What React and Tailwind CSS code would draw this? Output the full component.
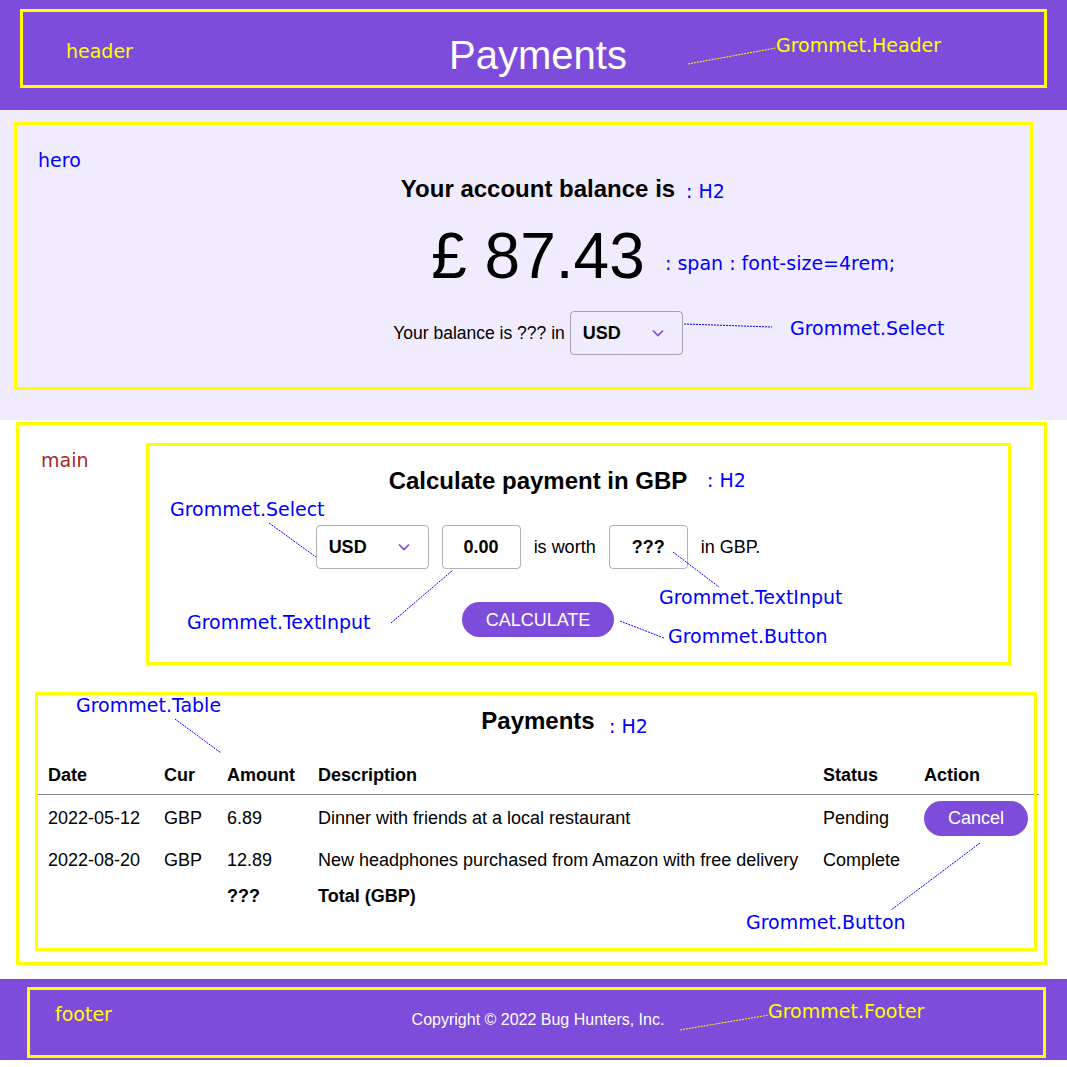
import React from "react";

const PURPLE = "#7d4cdb";

// Grommet-like down chevron
const FormDown = () => (
  <svg width="20" height="20" viewBox="0 0 24 24" fill="none">
    <polyline points="18 9 12 15 6 9" stroke={PURPLE} strokeWidth="2" />
  </svg>
);

const Select = () => (
  <div className="flex items-center justify-between w-[113px] h-[44px] pl-[12px] pr-[14px] border border-black/30 rounded-[4px]">
    <span className="text-[18px] font-bold">USD</span>
    <FormDown />
  </div>
);

const TextBox = ({ value }) => (
  <div className="flex items-center justify-center w-[79px] h-[44px] border border-black/30 rounded-[4px] text-[18px] font-bold">
    {value}
  </div>
);

const rows = [
  { date: "2022-05-12", cur: "GBP", amount: "6.89", desc: "Dinner with friends at a local restaurant", status: "Pending", cancel: true },
  { date: "2022-08-20", cur: "GBP", amount: "12.89", desc: "New headphones purchased from Amazon with free delivery", status: "Complete", cancel: false },
];

const cols = "grid grid-cols-[116px_63px_91px_505px_101px_126px] w-[1002px]";

// annotation label (overlay)
const Note = ({ x, y, color, children }) => (
  <span
    className="absolute whitespace-nowrap text-[19px] leading-[20px] font-['DejaVu_Sans',sans-serif]"
    style={{ left: x, top: y - 9, color }}
  >
    {children}
  </span>
);

const Box = ({ x, y, w, h }) => (
  <div className="absolute border-[3px] border-[#ffff00]" style={{ left: x, top: y, width: w, height: h }} />
);

export default function App() {
  const blue = "#0000ff";
  const yellow = "#ffff00";
  const lines = [
    [688, 64, 776, 48, yellow],
    [684, 324, 772, 327, blue],
    [269, 523, 316, 557, blue],
    [391, 623, 453, 570, blue],
    [673, 552, 719, 587, blue],
    [620, 621, 664, 638, blue],
    [175, 719, 221, 753, blue],
    [980, 843, 891, 910, blue],
    [680, 1030, 769, 1015, yellow],
  ];

  return (
    <div className="relative w-[1067px] h-[1067px] bg-white text-black font-['Liberation_Sans',Arial,sans-serif]">
      {/* header */}
      <header className="h-[110px] bg-[#7d4cdb] flex items-center justify-center pl-[9px]">
        <h1 className="text-[40px] leading-none text-white">Payments</h1>
      </header>

      {/* hero */}
      <section className="h-[310px] bg-[#f1ebfe] flex flex-col items-center pl-[9px] pt-[64px]">
        <h2 className="text-[24px] leading-[30px] font-bold">Your account balance is</h2>
        <span className="mt-[20px] text-[64px] leading-none">£ 87.43</span>
        <div className="mt-[23px] flex items-center gap-[5px]">
          <span className="text-[17.5px]">Your balance is ??? in</span>
          <Select />
        </div>
      </section>

      {/* main */}
      <main className="h-[559px] bg-white flex flex-col items-center pl-[9px] pt-[46px]">
        <h2 className="text-[24px] leading-[30px] font-bold">Calculate payment in GBP</h2>
        <div className="mt-[29px] flex items-center gap-[13px]">
          <Select />
          <TextBox value="0.00" />
          <span className="text-[18px]">is worth</span>
          <TextBox value="???" />
          <span className="text-[18px]">in GBP.</span>
        </div>
        <button className="mt-[33px] h-[35px] px-[24px] rounded-full bg-[#7d4cdb] text-white text-[18px] leading-none">
          CALCULATE
        </button>

        <h2 className="mt-[69px] text-[24px] leading-[30px] font-bold">Payments</h2>
        <div className="mt-[20px] text-[18px]">
          <div className={`${cols} h-[39px] items-center border-b border-[#888] font-bold`}>
            {["Date", "Cur", "Amount", "Description", "Status", "Action"].map((h) => (
              <div key={h} className="pl-[11px]">{h}</div>
            ))}
          </div>
          {rows.map((r, i) => (
            <div key={r.date} className={`${cols} ${i === 0 ? "h-[46px]" : "h-[38px]"} items-center`}>
              <div className="pl-[11px]">{r.date}</div>
              <div className="pl-[11px]">{r.cur}</div>
              <div className="pl-[11px]">{r.amount}</div>
              <div className="pl-[11px] whitespace-nowrap">{r.desc}</div>
              <div className="pl-[11px]">{r.status}</div>
              <div className="pl-[11px]">
                {r.cancel && (
                  <button className="h-[35px] px-[24px] rounded-full bg-[#7d4cdb] text-white text-[18px] leading-none">
                    Cancel
                  </button>
                )}
              </div>
            </div>
          ))}
          <div className={`${cols} h-[34px] items-center font-bold`}>
            <div />
            <div />
            <div className="pl-[11px]">???</div>
            <div className="pl-[11px]">Total (GBP)</div>
            <div />
            <div />
          </div>
        </div>
      </main>

      {/* footer */}
      <footer className="h-[81px] bg-[#7d4cdb] flex items-center justify-center pl-[9px]">
        <span className="text-[16px] text-white">Copyright © 2022 Bug Hunters, Inc.</span>
      </footer>

      {/* annotation overlay */}
      <div className="absolute inset-0 pointer-events-none">
        <Box x={20} y={9} w={1027} h={79} />
        <Box x={14} y={122} w={1019} h={268} />
        <Box x={16} y={422} w={1031} h={543} />
        <Box x={146} y={443} w={865} h={222} />
        <Box x={35} y={692} w={1002} h={259} />
        <Box x={27} y={987} w={1019} h={71} />

        <svg className="absolute left-0 top-0" width="1067" height="1067">
          {lines.map(([x1, y1, x2, y2, c], i) => (
            <line key={i} x1={x1} y1={y1} x2={x2} y2={y2} stroke={c} strokeWidth="1" strokeDasharray="2 1" />
          ))}
        </svg>

        <Note x={66} y={50} color={yellow}>header</Note>
        <Note x={776} y={44} color={yellow}>Grommet.Header</Note>
        <Note x={38} y={159} color={blue}>hero</Note>
        <Note x={686} y={190} color={blue}>: H2</Note>
        <Note x={665} y={262} color={blue}>: span : font-size=4rem;</Note>
        <Note x={790} y={327} color={blue}>Grommet.Select</Note>
        <Note x={41} y={459} color="#a52a2a">main</Note>
        <Note x={707} y={479} color={blue}>: H2</Note>
        <Note x={170} y={508} color={blue}>Grommet.Select</Note>
        <Note x={659} y={596} color={blue}>Grommet.TextInput</Note>
        <Note x={187} y={621} color={blue}>Grommet.TextInput</Note>
        <Note x={668} y={635} color={blue}>Grommet.Button</Note>
        <Note x={76} y={704} color={blue}>Grommet.Table</Note>
        <Note x={609} y={725} color={blue}>: H2</Note>
        <Note x={746} y={921} color={blue}>Grommet.Button</Note>
        <Note x={55} y={1013} color={yellow}>footer</Note>
        <Note x={768} y={1010} color={yellow}>Grommet.Footer</Note>
      </div>
    </div>
  );
}
